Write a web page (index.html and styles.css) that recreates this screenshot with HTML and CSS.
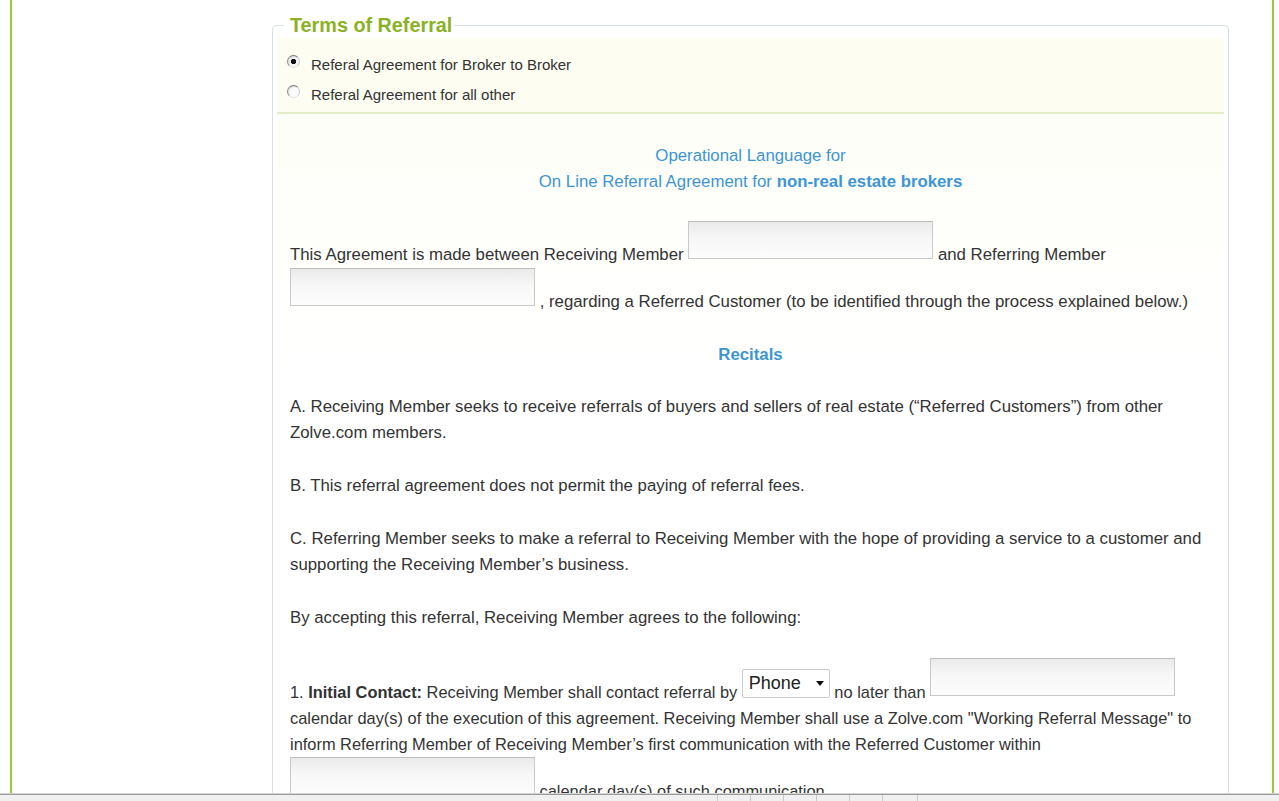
FILE: index.html
```html
<!DOCTYPE html>
<html>
<head>
<meta http-equiv="Content-Type" content="text/html; charset=utf-8">
<title>Terms of Referral</title>
<link rel="stylesheet" href="styles.css">
</head>
<body>
<div class="page">
	<div class="sidebar"></div>
	<div class="main">
		<fieldset class="terms">
			<legend>Terms of Referral</legend>
			<div class="types">
				<label class="choice"><input type="radio" name="agreement" checked>Referal Agreement for Broker to Broker</label>
				<label class="choice"><input type="radio" name="agreement">Referal Agreement for all other</label>
			</div>
			<div class="text">
				<p class="title">Operational Language for<br>On Line Referral Agreement for <b>non-real estate brokers</b></p>
				<p>This Agreement is made between Receiving Member <input type="text" class="field"> and Referring Member <input type="text" class="field"> , regarding a Referred Customer (to be identified through the process explained below.)</p>
				<p class="title"><b>Recitals</b></p>
				<p>A. Receiving Member seeks to receive referrals of buyers and sellers of real estate (&ldquo;Referred Customers&rdquo;) from other Zolve.com members.</p>
				<p>B. This referral agreement does not permit the paying of referral fees.</p>
				<p>C. Referring Member seeks to make a referral to Receiving Member with the hope of providing a service to a customer and supporting the Receiving Member&rsquo;s business.</p>
				<p>By accepting this referral, Receiving Member agrees to the following:</p>
				<p class="clause">1. <b>Initial Contact:</b> Receiving Member shall contact referral by <span class="pick"><select><option>Phone</option><option>Email</option></select></span> no later than <input type="text" class="field"> calendar day(s) of the execution of this agreement. Receiving Member shall use a Zolve.com "Working Referral Message" to inform Referring Member of Receiving Member&rsquo;s first communication with the Referred Customer within <input type="text" class="field"> calendar day(s) of such communication.</p>
			</div>
		</fieldset>
	</div>
</div>
<div class="status">
	<span class="cell wide"></span>
	<span class="cell"></span>
	<span class="cell"></span>
	<span class="cell"></span>
	<span class="cell"></span>
	<span class="cell"></span>
	<span class="cell box"></span>
	<span class="cell rest"></span>
</div>
</body>
</html>
```

FILE: styles.css
```css
html,body{
	margin:0;
	padding:0;
	overflow:hidden;
}
body{
	font-family:"Liberation Sans",Arial,sans-serif;
	color:#333;
	background:#fff;
}
.page{
	display:flex;
	min-height:100vh;
	margin:0 5px 0 10px;
	border-left:2px solid #9c3;
	border-right:2px solid #9c3;
}
.sidebar{
	width:260px;
	flex:none;
}
.main{
	flex:1;
	padding:14px 43px 0 0;
}
.terms{
	margin:0;
	padding:2px 4px 0;
	border:1px solid #d6dee7;
	border-bottom:none;
	border-radius:5px 5px 0 0;
	min-width:0;
}
.terms legend{
	margin-left:7px;
	padding:0 2px 0 6px;
	line-height:22px;
	font-size:19.8px;
	font-weight:bold;
	color:#8bb125;
}
.types{
	padding:11px 10px 3px;
	background:#fdfdf2;
	border-bottom:2px solid #e2ecc6;
}
.choice{
	display:flex;
	align-items:center;
	gap:11px;
	height:30px;
	font-size:15px;
}
.choice input{
	appearance:none;
	-webkit-appearance:none;
	width:13px;
	height:13px;
	margin:0 0 6px;
	border:1px solid;
	border-color:#7d7d7d #c9c9c9 #e2e2e2 #8a8a8a;
	border-radius:50%;
	background:#fbfbfb;
	box-shadow:inset 1px 1px 1px #dcdcdc;
}
.choice input:checked{
	background:radial-gradient(circle,#111 0,#111 2.3px,#f4f4f4 3px);
}
.text{
	padding:29px 13px 0;
	font-size:16.8px;
	line-height:26px;
	background:linear-gradient(#fefef8,#fff 260px);
}
.text p{
	margin:0 0 27px;
}
.text p.title{
	margin-bottom:26px;
	text-align:center;
	color:#3d95d5;
}
.text p.clause{
	font-size:16.4px;
}
.field{
	box-sizing:border-box;
	width:245px;
	height:38px;
	margin:0 0 5px;
	padding:0 6px;
	vertical-align:text-bottom;
	border:1px solid #c9c9c9;
	border-top-color:#bdbdbd;
	background:linear-gradient(#eaeaea,#f7f7f7 45%,#fcfcfc);
	font:inherit;
}
.pick{
	display:inline-block;
	position:relative;
	line-height:0;
	margin-bottom:3px;
	vertical-align:text-bottom;
}
.pick select{
	display:block;
	appearance:none;
	-webkit-appearance:none;
	box-sizing:border-box;
	width:88px;
	height:29px;
	margin:0;
	padding:0 0 2px 6px;
	border:1px solid #c8cdd3;
	border-radius:2px;
	background:#fff;
	font-family:"Liberation Sans",Arial,sans-serif;
	font-size:18px;
	color:#222;
}
.pick::after{
	content:"";
	position:absolute;
	right:6px;
	top:12px;
	border-left:4px solid transparent;
	border-right:4px solid transparent;
	border-top:5px solid #111;
}
.status{
	position:fixed;
	left:0;
	right:0;
	bottom:0;
	height:6px;
	display:flex;
	background:#f0f0f0;
	border-top:1px solid #9a9a9a;
	box-shadow:0 -1px 0 #d4d4d4;
}
.cell{
	box-sizing:border-box;
	width:33px;
	border-left:1px solid #c9c9c9;
}
.cell.wide{
	width:717px;
	border-left:none;
}
.cell.box{
	width:35px;
}
.rest{
	flex:1;
}
```
